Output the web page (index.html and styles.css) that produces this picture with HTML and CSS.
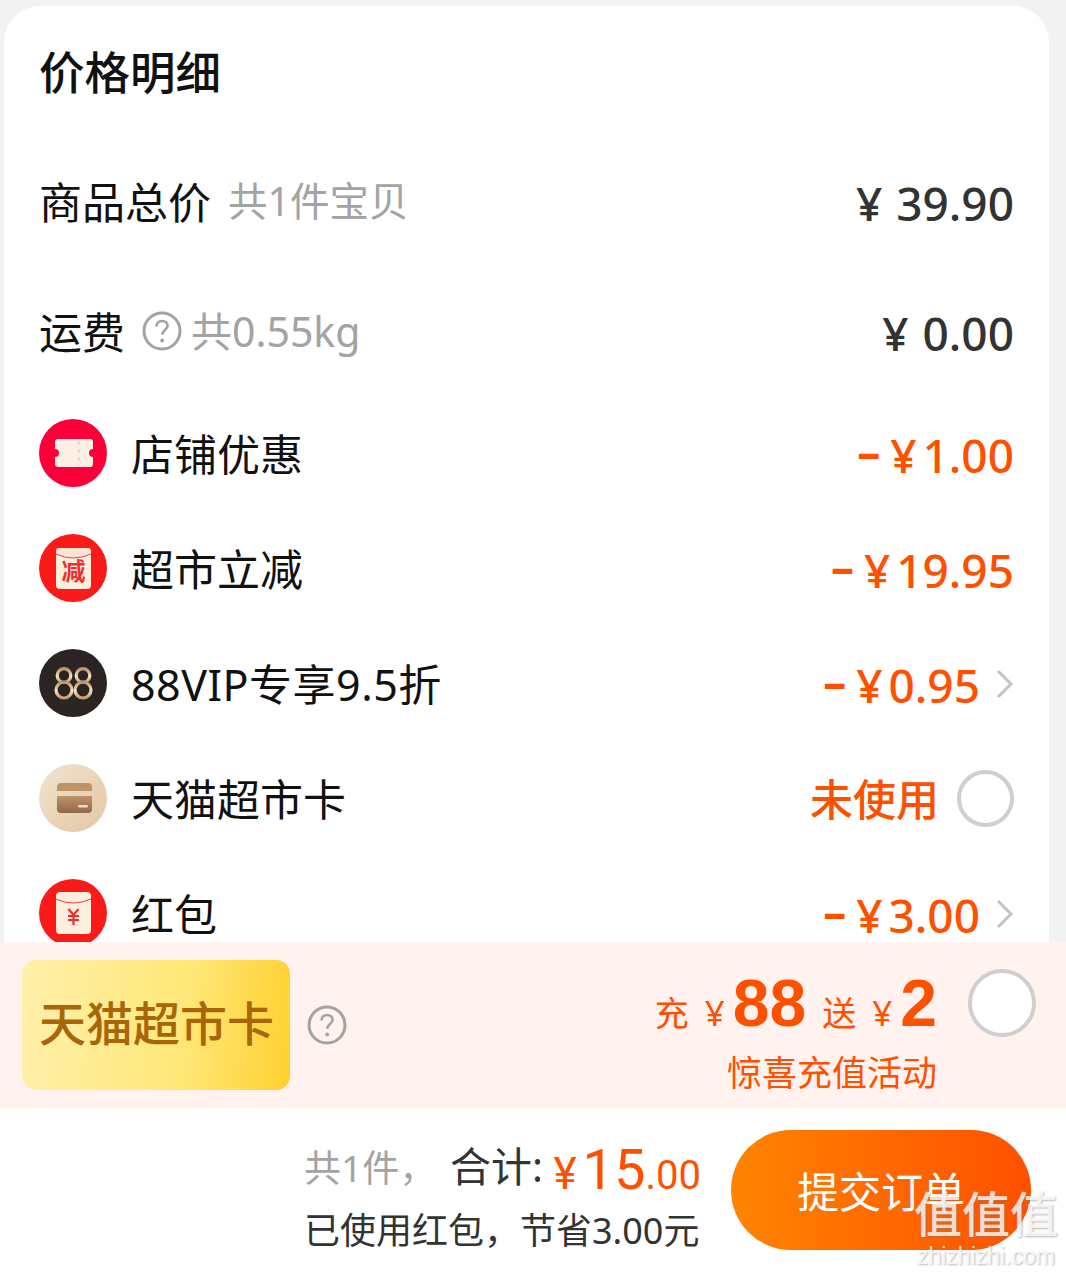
FILE: index.html
```html
<!DOCTYPE html>
<html lang="zh-CN">
<head>
    <meta charset="UTF-8">
    <title>价格明细</title>
    <link rel="stylesheet" href="styles.css">
</head>
<body>
    <div class="page">
        <div class="card">
            <h1 class="title">价格明细</h1>

            <div class="row row-plain">
                <div class="label">商品总价<span class="hint hint-goods">共1件宝贝</span></div>
                <div class="price"><span class="yen yen-wide">¥</span>39.90</div>
            </div>
            <div class="row row-plain row-ship">
                <div class="label">运费
                    <svg class="help help-ship" viewBox="0 0 40 40"><circle cx="20" cy="20" r="18" fill="none" stroke="#a3a3a3" stroke-width="3"/><path d="M14.500 15.500c0-3.300 2.400-5.500 5.600-5.500 3.100 0 5.500 2 5.500 4.800 0 4.200-5.400 4.400-5.400 9" fill="none" stroke="#a3a3a3" stroke-width="2.600"/><circle cx="20.200" cy="29.500" r="1.900" fill="#a3a3a3"/></svg>
                    <span class="hint hint-ship">共0.55kg</span>
                </div>
                <div class="price"><span class="yen yen-wide">¥</span>0.00</div>
            </div>

            <div class="row row-icon">
                <svg class="icon" viewBox="0 0 68 68"><circle cx="34" cy="34" r="34" fill="#fb0038"/><path d="M19 20h32a3 3 0 0 1 3 3v7a4 4 0 0 0 0 8v7a3 3 0 0 1-3 3H19a3 3 0 0 1-3-3v-7a4 4 0 0 0 0-8v-7a3 3 0 0 1 3-3z" fill="#fdeee6"/><path d="M40 22v25" stroke="#eed8c8" stroke-width="2.500" stroke-dasharray="4 4"/></svg>
                <div class="label">店铺优惠</div>
                <div class="price price-off"><span class="minus">–</span><span class="yen">¥</span>1.00</div>
            </div>
            <div class="row row-icon">
                <svg class="icon" viewBox="0 0 68 68"><circle cx="34" cy="34" r="34" fill="#fb1a1a"/><rect x="17" y="14" width="35" height="41" rx="4" fill="#fdeedd"/><path d="M17 19q17 9 35 0v-2a3 3 0 0 0-3-3H20a3 3 0 0 0-3 3z" fill="#fde3d3"/><path d="M17 20q17 8 35 0" fill="none" stroke="#f03c30" stroke-width="1"/><text x="34.500" y="46" class="icon-word">减</text></svg>
                <div class="label">超市立减</div>
                <div class="price price-off"><span class="minus">–</span><span class="yen">¥</span>19.95</div>
            </div>
            <div class="row row-icon">
                <svg class="icon" viewBox="0 0 68 68"><defs><linearGradient id="gold" x1="0" y1="0" x2="0" y2="1"><stop offset="0" stop-color="#b8946a"/><stop offset=".55" stop-color="#f5e3c4"/><stop offset="1" stop-color="#c49a6e"/></linearGradient></defs><circle cx="34" cy="34" r="34" fill="#2a2523"/><g fill="none" stroke="url(#gold)" stroke-width="3.200"><circle cx="25" cy="26.500" r="6.800"/><circle cx="25" cy="41" r="8"/><circle cx="44" cy="26.500" r="6.800"/><circle cx="44" cy="41" r="8"/></g></svg>
                <div class="label label-vip">88VIP专享9.5折</div>
                <div class="price price-off price-more"><span class="minus">–</span><span class="yen">¥</span>0.95</div>
                <svg class="chevron" viewBox="0 0 18 30"><path d="M2 2l13 13L2 28" fill="none" stroke="#c4c4c4" stroke-width="3"/></svg>
            </div>
            <div class="row row-icon">
                <svg class="icon" viewBox="0 0 68 68"><defs><linearGradient id="tan" x1="0" y1="0" x2="1" y2="1"><stop offset="0" stop-color="#f2e4cf"/><stop offset="1" stop-color="#e2c6a2"/></linearGradient><linearGradient id="wallet" x1="0" y1="0" x2="0" y2="1"><stop offset="0" stop-color="#bd9468"/><stop offset="1" stop-color="#93674a"/></linearGradient></defs><circle cx="34" cy="34" r="34" fill="url(#tan)"/><path d="M18 27v-4a4 4 0 0 1 4-4h27a4 4 0 0 1 4 4v4z" fill="#bd9468"/><path d="M18 32h35v13a4 4 0 0 1-4 4H22a4 4 0 0 1-4-4z" fill="url(#wallet)"/><rect x="39" y="41" width="10" height="2.600" rx="1.300" fill="#f6d9c5"/></svg>
                <div class="label">天猫超市卡</div>
                <div class="price price-off price-text">未使用</div>
                <div class="radio"></div>
            </div>
            <div class="row row-icon">
                <svg class="icon" viewBox="0 0 68 68"><circle cx="34" cy="34" r="34" fill="#fb1a1a"/><rect x="17" y="13" width="35" height="42" rx="4" fill="#fdeedd"/><path d="M17 20q17 8 35 0" fill="none" stroke="#f03c30" stroke-width="1"/><path d="M29.500 30l5 6 5-6M29 37h11M29 41h11M34.500 36v10" fill="none" stroke="#ee2f2a" stroke-width="2.200"/></svg>
                <div class="label">红包</div>
                <div class="price price-off price-more"><span class="minus">–</span><span class="yen">¥</span>3.00</div>
                <svg class="chevron" viewBox="0 0 18 30"><path d="M2 2l13 13L2 28" fill="none" stroke="#c4c4c4" stroke-width="3"/></svg>
            </div>
        </div>

        <div class="promo">
            <div class="promo-card">天猫超市卡</div>
            <svg class="help help-promo" viewBox="0 0 40 40"><circle cx="20" cy="20" r="18" fill="none" stroke="#a3a3a3" stroke-width="3"/><path d="M14.500 15.500c0-3.300 2.400-5.500 5.600-5.500 3.100 0 5.500 2 5.500 4.800 0 4.200-5.400 4.400-5.400 9" fill="none" stroke="#a3a3a3" stroke-width="2.600"/><circle cx="20.200" cy="29.500" r="1.900" fill="#a3a3a3"/></svg>
            <div class="promo-info">
                <div class="promo-deal">
                    <span class="deal-small">充</span><span class="deal-yen">¥</span><span class="deal-big">88</span><span class="deal-small deal-send">送</span><span class="deal-yen">¥</span><span class="deal-big">2</span>
                </div>
                <div class="promo-sub">惊喜充值活动</div>
            </div>
            <div class="radio radio-big"></div>
        </div>

        <div class="footer">
            <div class="sum">
                <div class="sum-line">
                    <span class="sum-count">共1件，</span>
                    <span class="sum-label">合计:</span>
                    <span class="sum-total"><span class="sum-yen">¥</span><span class="sum-int">15</span>.00</span>
                </div>
                <div class="sum-saved">已使用红包，节省3.00元</div>
            </div>
            <div class="submit">提交订单</div>
        </div>

        <div class="watermark">
            <div class="wm-big">值值值</div>
            <div class="wm-small">zhizhizhi.com</div>
        </div>
    </div>
</body>
</html>
```

FILE: styles.css
```css
* {
    box-sizing: border-box;
}
body {
    margin: 0;
    background-color: #f2f2f2;
    font-family: "Noto Sans", "Noto Sans CJK SC", sans-serif;
    color: #111;
}
.page {
    position: relative;
    width: 1066px;
    height: 1273px;
    display: flex;
    flex-direction: column;
    overflow: hidden;
}
.card {
    height: 936px;
    margin: 6px 17px 0 4px;
    padding: 0 35px;
    background-color: #fff;
    border-radius: 36px 36px 0 0;
    overflow: hidden;
}
.title {
    margin: 0;
    padding-top: 35px;
    height: 130px;
    font-size: 45.500px;
    line-height: 62px;
    font-weight: 500;
}
.row {
    display: flex;
    align-items: center;
}
.row-plain {
    height: 68px;
    margin-top: 31px;
    justify-content: space-between;
}
.row-ship {
    margin-top: 62px;
}
.row-icon {
    height: 68px;
    margin-top: 47px;
}
.row-ship + .row-icon {
    margin-top: 54px;
}
.label {
    display: flex;
    align-items: center;
    padding-top: 4px;
    font-size: 43px;
    line-height: 60px;
    white-space: nowrap;
}
.label-vip {
    letter-spacing: 0.5px;
}
.hint {
    margin-bottom: 4px;
    font-size: 39.500px;
    color: #a3a3a3;
}
.hint-ship {
    font-size: 41px;
}
.hint-goods {
    margin-left: 17px;
}
.help {
    flex: none;
    width: 40px;
    height: 40px;
}
.help-ship {
    margin: 0 9px 4px 17px;
}
.icon {
    flex: none;
    width: 68px;
    height: 68px;
    margin-right: 24px;
}
.icon-word {
    font-size: 24px;
    fill: #ee2f2a;
    text-anchor: middle;
    font-weight: 700;
}
.price {
    margin-left: auto;
    padding-top: 4px;
    font-size: 46px;
    font-weight: 500;
    line-height: 60px;
    color: #333;
    white-space: nowrap;
}
.price-off {
    color: #ff5000;
}
.yen {
    margin-right: 6px;
}
.yen-wide {
    margin-right: 14px;
}
.minus {
    display: inline-block;
    margin-right: 10px;
    font-weight: 700;
    transform: translateY(-4px);
}
.price-more {
    margin-right: 16px;
}
.price-text {
    margin-right: 18px;
    font-size: 43px;
}
.chevron {
    flex: none;
    width: 18px;
    height: 30px;
    margin-top: 2px;
}
.radio {
    flex: none;
    width: 57px;
    height: 57px;
    background-color: #fff;
    border: 4px solid #cfcfcf;
    border-radius: 50%;
}
.promo {
    height: 166px;
    padding: 18px 30px 18px 22px;
    display: flex;
    align-items: center;
    background-color: #fff2ef;
}
.promo-card {
    width: 268px;
    height: 130px;
    padding-left: 17px;
    font-size: 47px;
    font-weight: 500;
    line-height: 126px;
    color: #a8650a;
    white-space: nowrap;
    border-radius: 14px;
    background: linear-gradient(95deg, #fff0ab, #ffe878 60%, #ffd030);
}
.help-promo {
    margin-left: 17px;
}
.promo-info {
    align-self: flex-start;
    margin-left: auto;
    margin-right: 31px;
    text-align: right;
    color: #ff5000;
}
.promo-deal {
    display: flex;
    align-items: baseline;
    justify-content: flex-end;
    height: 78px;
    padding-top: 4px;
    line-height: 78px;
}
.deal-small {
    font-size: 34px;
}
.deal-send {
    margin-left: 16px;
}
.deal-yen {
    margin-left: 16px;
    margin-right: 8px;
    font-size: 35px;
}
.deal-big {
    font-family: "Liberation Sans", sans-serif;
    font-size: 66px;
    font-weight: 700;
}
.promo-sub {
    margin-top: 10px;
    font-size: 35px;
    line-height: 50px;
}
.radio-big {
    width: 68px;
    height: 68px;
    margin-bottom: 44px;
}
.footer {
    flex: 1;
    padding: 22px 35px 0 304px;
    display: flex;
    align-items: flex-start;
    background-color: #fff;
}
.sum {
    width: 397px;
}
.sum-line {
    display: flex;
    align-items: flex-start;
    height: 66px;
    line-height: 66px;
    white-space: nowrap;
}
.sum-count {
    width: 146px;
    margin-top: 5px;
    font-size: 37px;
    color: #a3a3a3;
}
.sum-label {
    margin-top: 3px;
    font-size: 41px;
    color: #333;
}
.sum-total {
    margin-left: auto;
    margin-top: 7px;
    font-family: Roboto, "Noto Sans", sans-serif;
    font-size: 40px;
    color: #ff5000;
}
.sum-yen {
    margin-right: 6px;
    font-size: 44px;
}
.sum-int {
    font-size: 56px;
}
.sum-saved {
    margin-top: 6px;
    font-size: 36px;
    line-height: 58px;
    color: #333;
    white-space: nowrap;
}
.submit {
    width: 300px;
    height: 120px;
    margin-left: 30px;
    padding-top: 2px;
    font-size: 42px;
    line-height: 120px;
    text-align: center;
    color: #fff;
    border-radius: 60px;
    background: linear-gradient(90deg, #ff8400, #ff5000);
}
.watermark {
    position: absolute;
    right: 8px;
    top: 1183px;
    width: 144px;
    text-align: center;
    color: rgba(255, 255, 255, 0.8);
    text-shadow: 1px 1px 2px rgba(120, 120, 120, 0.5);
}
.wm-big {
    font-size: 48px;
    font-weight: 500;
    line-height: 62px;
    white-space: nowrap;
}
.wm-small {
    font-family: "Liberation Sans", sans-serif;
    font-size: 23px;
    line-height: 22px;
}
```
